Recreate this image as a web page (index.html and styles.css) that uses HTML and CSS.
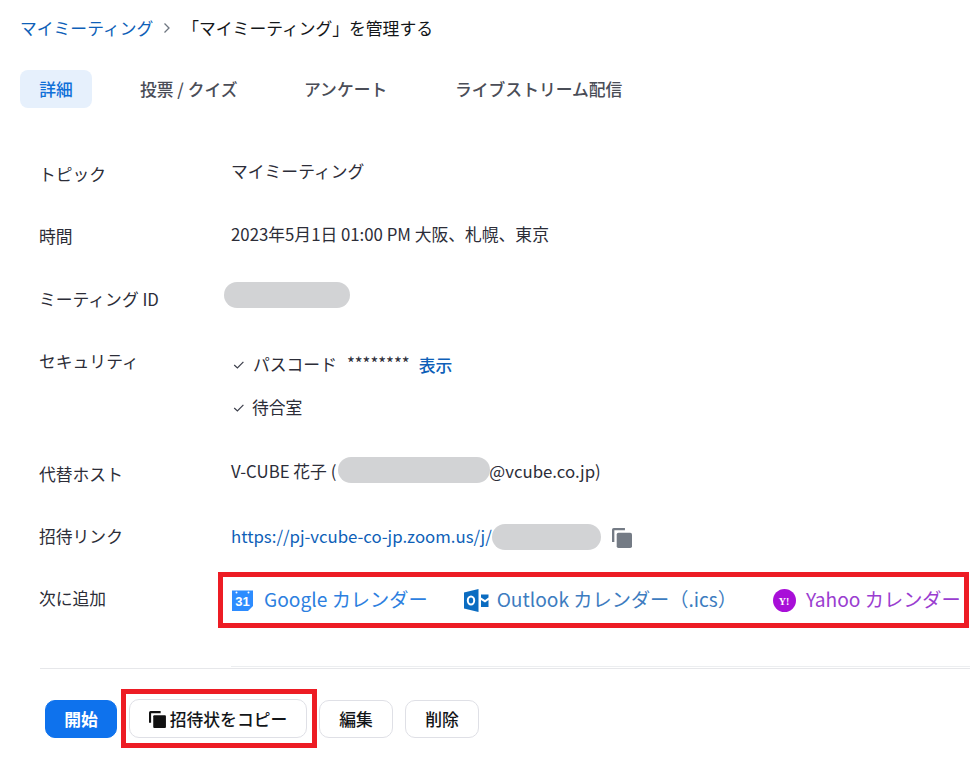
FILE: index.html
```html
<!DOCTYPE html>
<html lang="ja">
<head>
<meta charset="utf-8">
<title>マイミーティング</title>
<link rel="stylesheet" href="styles.css">
</head>
<body>
<nav class="crumbs">
  <a class="crumb-link">マイミーティング</a>
  <svg class="crumb-sep" width="8" height="12" viewBox="0 0 8 12"><path d="M1.5 1.5 6 6l-4.5 4.5" fill="none" stroke="#6e7680" stroke-width="1.3"/></svg>
  <span class="crumb-current">「マイミーティング」を管理する</span>
</nav>
<div class="tabs">
  <span class="tab tab-active">詳細</span>
  <span class="tab tab-poll">投票 / クイズ</span>
  <span class="tab tab-survey">アンケート</span>
  <span class="tab tab-live">ライブストリーム配信</span>
</div>
<section class="details">
  <div class="row row-first">
    <div class="label">トピック</div>
    <div class="value value-up">マイミーティング</div>
  </div>
  <div class="row">
    <div class="label">時間</div>
    <div class="value">2023年5月1日 01:00 PM 大阪、札幌、東京</div>
  </div>
  <div class="row">
    <div class="label">ミーティング ID</div>
    <div class="value"><span class="redact redact-id"></span></div>
  </div>
  <div class="row row-security">
    <div class="label">セキュリティ</div>
    <div class="value">
      <div class="check-line">
        <svg class="check" width="12" height="10" viewBox="0 0 12 10"><path d="M1.2 5 4.4 8l6-6.200" fill="none" stroke="#3c3f4b" stroke-width="1.2"/></svg>
        <span>パスコード</span><span class="stars">********</span><a class="show">表示</a>
      </div>
      <div class="check-line check-second">
        <svg class="check" width="12" height="10" viewBox="0 0 12 10"><path d="M1.2 5 4.4 8l6-6.200" fill="none" stroke="#3c3f4b" stroke-width="1.2"/></svg>
        <span>待合室</span>
      </div>
    </div>
  </div>
  <div class="row">
    <div class="label">代替ホスト</div>
    <div class="value host">V-CUBE 花子 (<span class="redact redact-mail"></span>@vcube.co.jp)</div>
  </div>
  <div class="row row-link">
    <div class="label">招待リンク</div>
    <div class="value link-line">
      <a class="invite">https://pj-vcube-co-jp.zoom.us/j/</a><span class="redact redact-link"></span>
      <svg class="copy-icon" width="20" height="20" viewBox="2 2 17 17"><path d="M2 3.500A1.500 1.500 0 0 1 3.500 2H13v2H4v10H2z" fill="#747b85"/><rect x="6" y="6" width="13" height="13" rx="1.500" fill="#747b85"/></svg>
    </div>
  </div>
  <div class="row row-cal">
    <div class="label">次に追加</div>
    <div class="cal-box">
      <a class="cal cal-google">
        <svg width="23" height="23" viewBox="0 0 23 23"><path d="M1 1.500h21v15.500l-5 5H1z" fill="#2d8cff"/><circle cx="5.500" cy="3.500" r="1" fill="#fff"/><circle cx="17.500" cy="3.500" r="1" fill="#fff"/><text x="11.500" y="17" class="cal-num">31</text></svg>
        Google カレンダー
      </a>
      <a class="cal cal-outlook">
        <svg width="25" height="23" viewBox="0 0 25 23"><path d="M0 3.500 14.500 0v23L0 19.500z" fill="#0b6cc1"/><path d="M17 5.500h7.500v3L21 11l-4-2.500zM17 11l4 2.500 3.500-2.500v7H17z" fill="#0b6cc1"/><ellipse cx="7" cy="11.500" rx="3.200" ry="4" fill="none" stroke="#fff" stroke-width="2"/></svg>
        Outlook カレンダー（.ics）
      </a>
      <a class="cal cal-yahoo">
        <svg width="23" height="23" viewBox="0 0 23 23"><circle cx="11.500" cy="11.500" r="11.500" fill="#a80fd8"/><text x="11" y="15.500" class="yahoo-y">Y!</text></svg>
        Yahoo カレンダー
      </a>
    </div>
  </div>
</section>
<div class="rule-short"></div>
<div class="rule"></div>
<div class="actions">
  <button class="btn btn-primary">開始</button>
  <div class="copy-box">
    <button class="btn btn-copy">
      <svg width="18" height="18" viewBox="0 0 17 17"><path d="M0 2.500A1.500 1.500 0 0 1 1.500 1H11v2H2v9H0z" fill="#111"/><rect x="4" y="5" width="12" height="12" rx="1" fill="#111"/></svg>
      招待状をコピー
    </button>
  </div>
  <button class="btn btn-edit">編集</button>
  <button class="btn btn-delete">削除</button>
</div>
</body>
</html>
```
FILE: styles.css
```css
* { box-sizing: border-box; }
html, body { margin: 0; padding: 0; }
body {
  width: 970px;
  height: 757px;
  overflow: hidden;
  background: #fff;
  color: #23232f;
  font-family: "Noto Sans CJK JP", "Noto Sans", sans-serif;
  font-size: 16.8px;
  line-height: 24px;
}
.crumbs {
  display: flex;
  align-items: center;
  padding: 16px 0 0 20px;
  height: 40px;
}
.crumb-link { color: #0e5fb8; white-space: nowrap; }
.crumb-sep { margin: 0 11px 0 10px; }
.crumb-current { color: #131619; }
.tabs {
  display: flex;
  align-items: center;
  margin: 30px 0 0 20px;
  height: 38px;
}
.tab {
  font-weight: 500;
  color: #4a4d57;
  white-space: nowrap;
}
.tab-active {
  background: #e6f0fc;
  color: #0e6fd8;
  border-radius: 8px;
  height: 38px;
  line-height: 38px;
  width: 72px;
  text-align: center;
}
.tab-poll { margin-left: 48px; width: 97px; }
.tab-survey { margin-left: 67px; width: 82px; }
.tab-live { margin-left: 69px; }
.details { padding: 0 0 0 39px; margin-top: 34px; }
.row { display: flex; height: 63px; padding-top: 19px; }
.row-first { height: 62px; }
.label { width: 192px; flex: none; color: #2c2d38; white-space: nowrap; margin-top: 1px; }
.row-link .label, .row-security .label { margin-top: 0; }
.value { flex: none; color: #2c2d38; margin-top: -1px; white-space: nowrap; }
.value-up { margin-top: -2px; }
.redact {
  display: inline-block;
  background: #d2d3d5;
  border-radius: 13px;
  height: 26px;
}
.redact-id { width: 126px; margin: -3px 0 0 -7px; vertical-align: top; }
.row-security { height: 112px; }
.check-line { display: flex; align-items: center; height: 24px; margin-top: 4px; }
.check { margin: 2px 8px 0 2px; }
.stars { margin-left: 10px; position: relative; top: -1px; }
.show { color: #0e5fb8; font-weight: 500; margin-left: 9px; position: relative; top: 1px; }
.check-second { margin-top: 19px; }
.check-second .check { margin-right: 7px; }
.host { margin-top: -2px; }
.redact-mail { width: 152px; margin: 0 -1px 0 2px; vertical-align: top; position: relative; top: -2px; }
.link-line { display: flex; align-items: flex-start; margin-top: 0; }
.invite { color: #0e5fb8; }
.redact-link { width: 109px; }
.copy-icon { margin: 4px 0 0 11px; }
.row-cal { padding-top: 0; height: 94px; margin-top: 4px; }
.row-cal .label { margin-top: 14px; width: 179px; }
.cal-box {
  display: flex;
  align-items: center;
  width: 751px;
  height: 56px;
  border: 5px solid #ed1c24;
  padding: 0 0 2px 8px;
  font-size: 19.2px;
}
.cal { display: flex; align-items: center; gap: 10px; white-space: nowrap; }
.cal svg { position: relative; top: 1px; }
.cal-google { color: #2d7fe0; }
.cal-outlook { color: #3d7cc0; margin-left: 36px; gap: 8px; }
.cal-yahoo { color: #9a3dd0; margin-left: 36px; gap: 10px; }
.cal-num { font-size: 13px; font-weight: 700; fill: #fff; text-anchor: middle; font-family: "Liberation Sans", sans-serif; }
.yahoo-y { font-size: 10px; font-weight: 700; fill: #fff; text-anchor: middle; font-family: "Liberation Serif", serif; }
.rule-short { height: 1px; background: #eceef0; margin: 0 0 0 231px; }
.rule { height: 1px; background: #e6e7ea; margin: 1px 0 0 40px; }
.actions { display: flex; align-items: center; padding-left: 45px; margin-top: 20px; }
.btn {
  font: inherit;
  border-radius: 10px;
  border: 1px solid #dfe0e6;
  background: #fff;
  color: #131619;
  height: 38px;
  padding: 0;
  font-weight: 500;
}
.btn-primary { background: #0e72ed; border-color: #0e72ed; color: #fff; width: 72px; font-weight: 700; }
.copy-box {
  border: 5px solid #ed1c24;
  margin-left: 4px;
  padding: 5px 5px 5px 3px;
  height: 59px;
  width: 196px;
  display: flex;
  align-items: flex-start;
}
.btn-copy {
  width: 178px;
  height: 39px;
  display: flex;
  align-items: center;
  justify-content: center;
  gap: 3px;
}
.btn-edit { width: 74px; margin-left: 2px; }
.btn-delete { width: 74px; margin-left: 12px; }
```
